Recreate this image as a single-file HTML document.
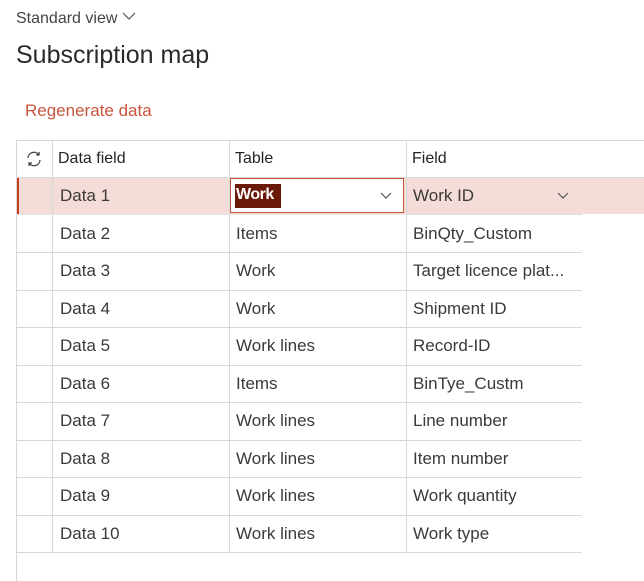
<!DOCTYPE html>
<html><head><style>
body{margin:0;width:644px;height:581px;background:#fff;font-family:"Segoe UI","Liberation Sans",sans-serif;position:relative;overflow:hidden;color:#323130}
.a{position:absolute;white-space:nowrap}
.vl{position:absolute;width:1px;background:#d8d8d8}
.hl{position:absolute;height:1px;background:#d8d8d8}
.c{position:absolute;font-size:17px;color:#3b3a39;white-space:nowrap}
</style></head><body>
<div class="a" style="left:16px;top:10px;font-size:16px;color:#444">Standard view <svg width="14" height="9" viewBox="0 0 14 9" style="vertical-align:2px"><path d="M1 1l6 6 6-6" fill="none" stroke="#555" stroke-width="1.2"/></svg></div>
<div class="a" style="left:16px;top:41px;font-size:25px;color:#2b2a29">Subscription map</div>
<div class="a" style="left:25px;top:101px;font-size:17px;color:#c8553d">Regenerate data</div>

<div style="position:absolute;left:16px;top:177px;width:628px;height:37px;background:#f4dcd8"></div>
<div style="position:absolute;left:16px;top:177px;width:3px;height:37px;background:#c4401a"></div>
<div style="position:absolute;left:230px;top:178px;width:174px;height:35px;background:#fff;border:1px solid #c8553d;box-sizing:border-box"></div>
<div style="position:absolute;left:235px;top:184px;width:46px;height:24px;background:#6b1a0a"></div>

<div class="hl" style="left:16px;top:140px;width:628px"></div>
<div class="hl" style="left:16px;top:177px;width:628px"></div>
<div class="hl" style="left:406px;top:214px;width:176px;background:#e0e0e0"></div>
<div class="vl" style="left:16px;top:140px;height:441px"></div>
<div class="vl" style="left:52px;top:140px;height:412px"></div>
<div class="vl" style="left:229px;top:140px;height:412px"></div>
<div class="vl" style="left:406px;top:140px;height:412px"></div>

<svg class="a" style="left:25px;top:150px" width="18" height="18" viewBox="0 0 18 18"><path d="M3 8a6 6 0 0 1 11-3M15 10a6 6 0 0 1-11 3" fill="none" stroke="#444" stroke-width="1.3"/><path d="M14 2v3h-3M4 16v-3h3" fill="none" stroke="#444" stroke-width="1.3"/></svg>
<div class="c" style="left:58px;top:150px;font-size:16px;color:#252423">Data field</div>
<div class="c" style="left:235px;top:150px;font-size:16px;color:#252423">Table</div>
<div class="c" style="left:412px;top:150px;font-size:16px;color:#252423">Field</div>

<div id="rows"></div>
<svg class="a" style="left:380px;top:192px" width="12" height="8" viewBox="0 0 12 8"><path d="M1 1l5 5 5-5" fill="none" stroke="#555" stroke-width="1.2"/></svg>
<svg class="a" style="left:557px;top:192px" width="12" height="8" viewBox="0 0 12 8"><path d="M1 1l5 5 5-5" fill="none" stroke="#555" stroke-width="1.2"/></svg>
<script>
var d=[["Data 1","Work","Work ID"],["Data 2","Items","BinQty_Custom"],["Data 3","Work","Target licence plat..."],["Data 4","Work","Shipment ID"],["Data 5","Work lines","Record-ID"],["Data 6","Items","BinTye_Custm"],["Data 7","Work lines","Line number"],["Data 8","Work lines","Item number"],["Data 9","Work lines","Work quantity"],["Data 10","Work lines","Work type"]];
var h="";
for(var i=0;i<10;i++){var t=177+i*37.5;
h+='<div class="c" style="left:60px;top:'+(t+9)+'px">'+d[i][0]+'</div>';
h+='<div class="c" style="left:236px;top:'+(t+9)+'px;'+(i==0?'color:#fff;font-weight:bold;font-size:16px;letter-spacing:-0.5px':'')+'">'+d[i][1]+'</div>';
h+='<div class="c" style="left:413px;top:'+(t+9)+'px">'+d[i][2]+'</div>';
if(i>0)h+='<div class="hl" style="left:16px;top:'+Math.round(t+37.5)+'px;width:566px"></div>';}
h+='<div class="hl" style="left:16px;top:214px;width:390px;background:#e6e6e6"></div>';
document.getElementById("rows").innerHTML=h;
</script>
</body></html>
